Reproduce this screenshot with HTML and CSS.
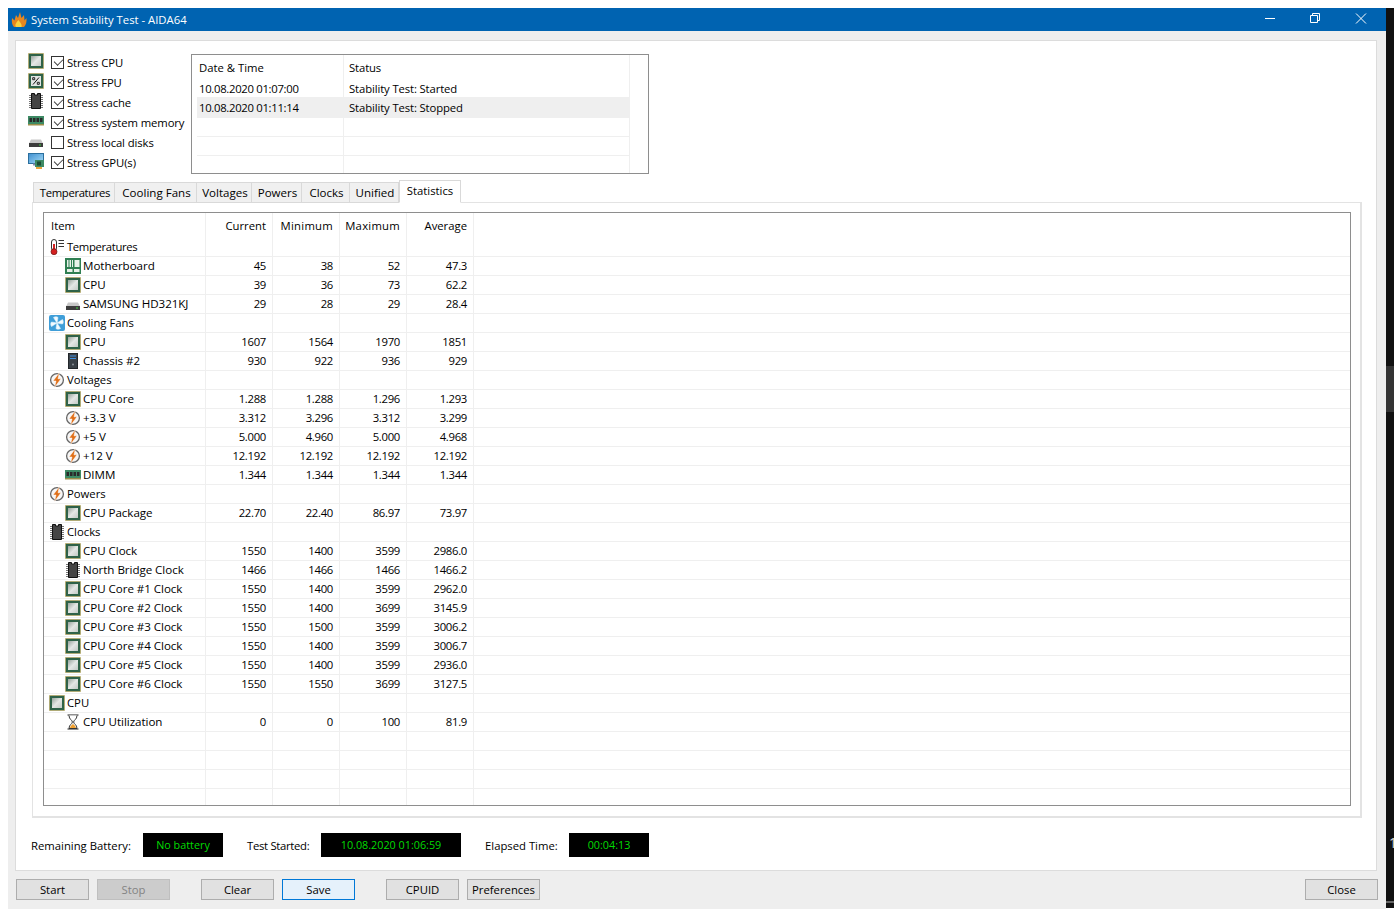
FILE: index.html
```html
<!DOCTYPE html>
<html lang="en">
<head>
<meta charset="utf-8">
<title>System Stability Test - AIDA64</title>
<link rel="stylesheet" href="styles.css">
</head>
<body>
<svg class="defs" width="0" height="0" aria-hidden="true">
  <defs>
    <linearGradient id="g-die" x1="0" y1="0" x2="1" y2="1"><stop offset="0" stop-color="#98a39c"/><stop offset=".5" stop-color="#e4e7e5"/><stop offset="1" stop-color="#c4cac6"/></linearGradient>
    <linearGradient id="g-mon" x1="0" y1="0" x2="1" y2="1"><stop offset="0" stop-color="#3f8fd0"/><stop offset="1" stop-color="#a6dcf7"/></linearGradient>
    <symbol id="i-cpu" viewBox="0 0 16 16">
      <rect x="0.500" y="0.500" width="15" height="15" fill="#2f6048" stroke="#c9a64a" stroke-dasharray="1 1"/>
      <rect x="1.500" y="1.500" width="13" height="13" fill="#2f6348"/>
      <rect x="3" y="3" width="10" height="10" fill="url(#g-die)"/>
    </symbol>
    <symbol id="i-fpu" viewBox="0 0 16 16">
      <rect x="0.500" y="0.500" width="15" height="15" fill="#2f6048" stroke="#c9a64a" stroke-dasharray="1 1"/>
      <rect x="1.500" y="1.500" width="13" height="13" fill="#2f6348"/>
      <rect x="3" y="3" width="10" height="10" fill="#e2e5e3"/>
      <path d="M5 11.500 11 4.500" stroke="#111"/>
      <path d="M4.700 4.700h2v2h-2zM9.300 9.300h2v2h-2z" stroke="#111" fill="none" stroke-width=".9"/>
    </symbol>
    <symbol id="i-chip" viewBox="0 0 16 16">
      <path d="M1 2.500h2M1 4.500h2M1 6.500h2M1 8.500h2M1 10.500h2M1 12.500h2M1 14.500h2M13 2.500h2M13 4.500h2M13 6.500h2M13 8.500h2M13 10.500h2M13 12.500h2M13 14.500h2" stroke="#777"/>
      <path d="M3.500.5h3v1.500h3V.5h3v15h-9z" fill="#444" stroke="#111"/>
    </symbol>
    <symbol id="i-ram" viewBox="0 0 16 16">
      <rect x="0" y="3" width="16" height="8" fill="#3d8a64"/>
      <path d="M1.500 5h2.500v4H1.500zM5 5h2.500v4H5zM8.500 5H11v4H8.500zM12 5h2.500v4H12z" fill="#2a2a2a"/>
      <path d="M0 11h16v1.500H0z" fill="#9a8f4a"/>
    </symbol>
    <symbol id="i-disk" viewBox="0 0 16 16">
      <path d="M3 6.500h10l2 4H1z" fill="#c7c7c7"/>
      <rect x="1" y="10" width="14" height="4" fill="#3c3c3c"/>
      <rect x="11" y="11.500" width="2" height="1" fill="#3fd23f"/>
    </symbol>
    <symbol id="i-gpu" viewBox="0 0 16 16">
      <rect x="0.500" y="0.500" width="15" height="10" fill="url(#g-mon)" stroke="#2b6f9e"/>
      <rect x="5" y="10.500" width="3" height="2" fill="#88a"/>
      <rect x="7" y="7" width="9" height="7" fill="#3d8a64"/>
      <rect x="9" y="8.500" width="4" height="4" fill="#1c4d33"/>
      <rect x="8" y="14" width="6" height="2" fill="#e8a33a"/>
    </symbol>
    <symbol id="i-therm" viewBox="0 0 16 16">
      <rect x="2.500" y="0.500" width="5" height="11" rx="2.500" fill="#fff" stroke="#333"/>
      <rect x="4" y="5" width="2" height="7" fill="#d42020"/>
      <circle cx="5" cy="12.700" r="3" fill="#d42020" stroke="#6a1010" stroke-width=".7"/>
      <path d="M9.500 1.500H15M9.500 4.500H15M9.500 7.500H15" stroke="#333" stroke-width="1.100"/>
    </symbol>
    <symbol id="i-board" viewBox="0 0 16 16">
      <rect x="0" y="0" width="16" height="16" fill="#2f7f52"/>
      <path d="M2 2h1.500v7H2zM4.500 2H6v7H4.500zM7 2h1v7H7z" fill="#e9f2ea"/>
      <rect x="9.500" y="2" width="5" height="7" fill="#e9f2ea"/>
      <rect x="2" y="11" width="5.500" height="3" fill="#e9f2ea"/>
      <rect x="9" y="11" width="5.500" height="3" fill="#e9f2ea"/>
    </symbol>
    <symbol id="i-fan" viewBox="0 0 16 16">
      <rect width="16" height="16" rx="2" fill="#3f9ed8"/>
      <path d="M8 8 4.500 2.500C6 1.500 8 1.500 9 2.500zM8 8l5.500-3.500c1 1.500 1 3.500 0 4.500zM8 8l3.500 5.500c-1.500 1-3.500 1-4.500 0zM8 8l-5.500 3.500c-1-1.500-1-3.500 0-4.500z" fill="#f4fbff" stroke="#dff2fc" stroke-width=".6"/>
    </symbol>
    <symbol id="i-case" viewBox="0 0 16 16">
      <rect x="3.500" y="0.500" width="9" height="15" fill="#3a4148" stroke="#22262a"/>
      <path d="M5 3h6M5 5.500h6" stroke="#3f8fe0" stroke-width="1.200"/>
      <circle cx="8" cy="11.500" r="1" fill="#8a9198"/>
    </symbol>
    <symbol id="i-bolt" viewBox="0 0 16 16">
      <circle cx="8" cy="8" r="6.400" fill="#f6f6f6" stroke="#666" stroke-width="1.300"/>
      <path d="M10.500.5 4 9h3L5.500 15.500 12 6.800H9z" fill="#e0701a" stroke="#fff" stroke-width=".5"/>
    </symbol>
    <symbol id="i-hour" viewBox="0 0 16 16">
      <path d="M2.500 1h11M2.500 15h11" stroke="#222" stroke-width="1.200"/>
      <path d="M4 1.500c0 4 3.400 4.500 3.400 6.500S4 10.500 4 14.500h8c0-4-3.400-4.500-3.400-6.500S12 5.500 12 1.500" fill="#fff" stroke="#333"/>
      <path d="M5 14c.4-2 2-3 3-4.200 1 1.200 2.600 2.200 3 4.200z" fill="#f0a030"/>
    </symbol>
    <symbol id="i-flame" viewBox="0 0 16 16">
      <path d="M3 15C1 13 .5 10 1 6l2.500 2.500L5 3l2 3 2-6 1.500 6L13 3l.5 5.500L15.500 6c.3 4-.5 7-2.500 9z" fill="#e8871e"/>
      <path d="M5 15c-1.500-2 0-4 2.500-7 1 2 4 4 3 7z" fill="#fbd33d"/>
    </symbol>
  </defs>
</svg>

<div class="window">
  <header class="titlebar">
    <svg class="ti"><use href="#i-flame"/></svg>
    <span class="title">System Stability Test - AIDA64</span>
    <div class="wbtns">
      <svg class="wbtn" viewBox="0 0 46 23"><path d="M19 10.500h10" stroke="#fff" fill="none"/></svg>
      <svg class="wbtn" viewBox="0 0 46 23"><path d="M18.500 7.500h7v7h-7zM20.500 7.500v-2h7v7h-2" stroke="#fff" fill="none"/></svg>
      <svg class="wbtn" viewBox="0 0 46 23"><path d="M18 5.500l10 10M28 5.500l-10 10" stroke="#fff" fill="none"/></svg>
    </div>
  </header>

  <div class="client">
    <div class="panel">
      <section class="top">
        <ul class="stress">
          <li><svg class="ic"><use href="#i-cpu"/></svg><span class="cb on"></span>Stress CPU</li>
          <li><svg class="ic"><use href="#i-fpu"/></svg><span class="cb on"></span>Stress FPU</li>
          <li><svg class="ic"><use href="#i-chip"/></svg><span class="cb on"></span>Stress cache</li>
          <li><svg class="ic"><use href="#i-ram"/></svg><span class="cb on"></span>Stress system memory</li>
          <li><svg class="ic"><use href="#i-disk"/></svg><span class="cb"></span>Stress local disks</li>
          <li><svg class="ic"><use href="#i-gpu"/></svg><span class="cb on"></span>Stress GPU(s)</li>
        </ul>
        <div class="log">
          <div class="lr lh"><span class="c1">Date &amp; Time</span><span class="c2">Status</span></div>
          <div class="lr"><span class="c1 num">10.08.2020 01:07:00</span><span class="c2">Stability Test: Started</span></div>
          <div class="lr sel"><span class="c1 num">10.08.2020 01:11:14</span><span class="c2">Stability Test: Stopped</span></div>
          <div class="lr"><span class="c1"></span><span class="c2"></span></div>
          <div class="lr"><span class="c1"></span><span class="c2"></span></div>
          <div class="lr last"><span class="c1"></span><span class="c2"></span></div>
        </div>
      </section>

      <nav class="tabs">
        <span class="tab t1"><span class="tight">Temperatures</span></span>
        <span class="tab t2">Cooling Fans</span>
        <span class="tab t3">Voltages</span>
        <span class="tab t4">Powers</span>
        <span class="tab t5">Clocks</span>
        <span class="tab t6">Unified</span>
        <span class="tab active">Statistics</span>
      </nav>

      <section class="tabpage">
        <div class="grid">
          <div class="row head"><span class="name">Item</span><span>Current</span><span class="wide">Minimum</span><span class="wide">Maximum</span><span>Average</span><span></span></div>
          <div class="row group"><span class="name"><svg class="tic"><use href="#i-therm"/></svg><span class="tight">Temperatures</span></span><span></span><span></span><span></span><span></span><span></span></div>
          <div class="row child"><span class="name"><svg class="tic"><use href="#i-board"/></svg>Motherboard</span><span>45</span><span>38</span><span>52</span><span>47.3</span><span></span></div>
          <div class="row child"><span class="name"><svg class="tic"><use href="#i-cpu"/></svg>CPU</span><span>39</span><span>36</span><span>73</span><span>62.2</span><span></span></div>
          <div class="row child"><span class="name"><svg class="tic"><use href="#i-disk"/></svg>SAMSUNG HD321KJ</span><span>29</span><span>28</span><span>29</span><span>28.4</span><span></span></div>
          <div class="row group"><span class="name"><svg class="tic"><use href="#i-fan"/></svg>Cooling Fans</span><span></span><span></span><span></span><span></span><span></span></div>
          <div class="row child"><span class="name"><svg class="tic"><use href="#i-cpu"/></svg>CPU</span><span>1607</span><span>1564</span><span>1970</span><span>1851</span><span></span></div>
          <div class="row child"><span class="name"><svg class="tic"><use href="#i-case"/></svg>Chassis #2</span><span>930</span><span>922</span><span>936</span><span>929</span><span></span></div>
          <div class="row group"><span class="name"><svg class="tic"><use href="#i-bolt"/></svg>Voltages</span><span></span><span></span><span></span><span></span><span></span></div>
          <div class="row child"><span class="name"><svg class="tic"><use href="#i-cpu"/></svg>CPU Core</span><span>1.288</span><span>1.288</span><span>1.296</span><span>1.293</span><span></span></div>
          <div class="row child"><span class="name"><svg class="tic"><use href="#i-bolt"/></svg>+3.3 V</span><span>3.312</span><span>3.296</span><span>3.312</span><span>3.299</span><span></span></div>
          <div class="row child"><span class="name"><svg class="tic"><use href="#i-bolt"/></svg>+5 V</span><span>5.000</span><span>4.960</span><span>5.000</span><span>4.968</span><span></span></div>
          <div class="row child"><span class="name"><svg class="tic"><use href="#i-bolt"/></svg>+12 V</span><span>12.192</span><span>12.192</span><span>12.192</span><span>12.192</span><span></span></div>
          <div class="row child"><span class="name"><svg class="tic"><use href="#i-ram"/></svg>DIMM</span><span>1.344</span><span>1.344</span><span>1.344</span><span>1.344</span><span></span></div>
          <div class="row group"><span class="name"><svg class="tic"><use href="#i-bolt"/></svg>Powers</span><span></span><span></span><span></span><span></span><span></span></div>
          <div class="row child"><span class="name"><svg class="tic"><use href="#i-cpu"/></svg>CPU Package</span><span>22.70</span><span>22.40</span><span>86.97</span><span>73.97</span><span></span></div>
          <div class="row group"><span class="name"><svg class="tic"><use href="#i-chip"/></svg>Clocks</span><span></span><span></span><span></span><span></span><span></span></div>
          <div class="row child"><span class="name"><svg class="tic"><use href="#i-cpu"/></svg>CPU Clock</span><span>1550</span><span>1400</span><span>3599</span><span>2986.0</span><span></span></div>
          <div class="row child"><span class="name"><svg class="tic"><use href="#i-chip"/></svg>North Bridge Clock</span><span>1466</span><span>1466</span><span>1466</span><span>1466.2</span><span></span></div>
          <div class="row child"><span class="name"><svg class="tic"><use href="#i-cpu"/></svg>CPU Core #1 Clock</span><span>1550</span><span>1400</span><span>3599</span><span>2962.0</span><span></span></div>
          <div class="row child"><span class="name"><svg class="tic"><use href="#i-cpu"/></svg>CPU Core #2 Clock</span><span>1550</span><span>1400</span><span>3699</span><span>3145.9</span><span></span></div>
          <div class="row child"><span class="name"><svg class="tic"><use href="#i-cpu"/></svg>CPU Core #3 Clock</span><span>1550</span><span>1500</span><span>3599</span><span>3006.2</span><span></span></div>
          <div class="row child"><span class="name"><svg class="tic"><use href="#i-cpu"/></svg>CPU Core #4 Clock</span><span>1550</span><span>1400</span><span>3599</span><span>3006.7</span><span></span></div>
          <div class="row child"><span class="name"><svg class="tic"><use href="#i-cpu"/></svg>CPU Core #5 Clock</span><span>1550</span><span>1400</span><span>3599</span><span>2936.0</span><span></span></div>
          <div class="row child"><span class="name"><svg class="tic"><use href="#i-cpu"/></svg>CPU Core #6 Clock</span><span>1550</span><span>1550</span><span>3699</span><span>3127.5</span><span></span></div>
          <div class="row group"><span class="name"><svg class="tic"><use href="#i-cpu"/></svg>CPU</span><span></span><span></span><span></span><span></span><span></span></div>
          <div class="row child"><span class="name"><svg class="tic"><use href="#i-hour"/></svg>CPU Utilization</span><span>0</span><span>0</span><span>100</span><span>81.9</span><span></span></div>
          <div class="row blank"><span class="name"></span><span></span><span></span><span></span><span></span><span></span></div>
          <div class="row blank"><span class="name"></span><span></span><span></span><span></span><span></span><span></span></div>
          <div class="row blank"><span class="name"></span><span></span><span></span><span></span><span></span><span></span></div>
          <div class="row blank"><span class="name"></span><span></span><span></span><span></span><span></span><span></span></div>
        </div>
      </section>

      <section class="status">
        <span class="sl s1">Remaining Battery:</span><span class="led l1">No battery</span>
        <span class="sl s2">Test Started:</span><span class="led l2">10.08.2020 01:06:59</span>
        <span class="sl s3">Elapsed Time:</span><span class="led l3">00:04:13</span>
      </section>
    </div>

    <footer class="buttons">
      <button class="btn">Start</button>
      <button class="btn off">Stop</button>
      <button class="btn g1">Clear</button>
      <button class="btn focus">Save</button>
      <button class="btn g2">CPUID</button>
      <button class="btn">Preferences</button>
      <button class="btn end">Close</button>
    </footer>
  </div>
</div>
<aside class="strip"><div class="thumb"></div><div class="glyph">1</div><div class="edge"></div></aside>
</body>
</html>
```
FILE: styles.css
```css
* { box-sizing: border-box; }
html, body { margin: 0; }
body {
  background: #fff;
  font-family: "Open Sans", "Noto Sans", sans-serif;
  font-size: 11.3px;
  color: #000;
  overflow: hidden;
  height: 916px;
  padding: 8px 0 8px 8px;
  display: flex;
}
.defs { position: absolute; }
.tight { letter-spacing: -0.35px; }
.num { letter-spacing: -0.3px; }

.window { width: 1378px; height: 900px; flex: none; display: flex; flex-direction: column; }
.titlebar { height: 23px; background: #0063b1; color: #fff; display: flex; align-items: center; flex: none; }
.ti { width: 16px; height: 16px; margin-left: 3px; }
.title { margin-left: 4px; }
.wbtns { margin-left: auto; display: flex; margin-right: 2px; }
.wbtn { width: 46px; height: 23px; }

.client { flex: 1; background: #eeeeee; padding: 9px 9px 0 7px; display: flex; flex-direction: column; }
.panel { height: 831px; flex: none; background: #fff; border: 1px solid #dcdcdc; display: flex; flex-direction: column; }

.top { display: flex; height: 139px; flex: none; padding: 4px 0 0 12px; }
.stress { list-style: none; margin: 0; padding: 7px 0 0; width: 163px; flex: none; letter-spacing: -0.1px; }
.stress li { height: 20px; display: flex; align-items: center; white-space: nowrap; }
.ic { width: 16px; height: 16px; flex: none; margin-bottom: 2px; }
.cb { width: 13px; height: 13px; border: 1px solid #333; margin: 0 3px 0 7px; flex: none; position: relative; background: #fff; }
.cb.on::after { content: ""; position: absolute; left: 1.500px; top: 1px; width: 8px; height: 5px; border-left: 1px solid #333; border-bottom: 1px solid #333; transform: rotate(-45deg) scale(.9); }

.log { width: 458px; height: 120px; flex: none; margin-top: 9px; border: 1px solid #8e8e8e; padding: 0 18px 0 5px; display: flex; flex-direction: column; overflow: hidden; }
.lr { height: 19px; flex: none; display: flex; align-items: center; border-bottom: 1px solid #efefef; }
.lr.lh { height: 24px; border-bottom: none; }
.lr.sel { height: 20px; background: #efefef; }
.lr.last { border-bottom: none; }
.c1 { width: 147px; padding-left: 2px; height: 100%; display: flex; align-items: center; border-right: 1px solid #efefef; flex: none; }
.c2 { padding-left: 5px; flex: 1; height: 100%; display: flex; align-items: center; border-right: 1px solid #efefef; white-space: nowrap; letter-spacing: -0.12px; }

.tabs { display: flex; padding-left: 17px; height: 23px; flex: none; align-items: flex-end; position: relative; z-index: 1; }
.tab { height: 21px; display: flex; align-items: center; justify-content: center; background: #f0f0f0; border: 1px solid #d9d9d9; border-left: none; white-space: nowrap; font-size: 11.55px; padding-left: 2px; }
.t1 { width: 82px; border-left: 1px solid #d9d9d9; font-size: 11.3px; }
.t2 { width: 82px; }
.t3 { width: 55px; }
.t4 { width: 50px; }
.t5 { width: 48px; }
.t6 { width: 49px; }
.tab.active { height: 23px; width: 62px; background: #fff; border-bottom-color: #fff; border-left: 1px solid #d9d9d9; padding: 0 0 3px; font-size: 11.3px; }

.tabpage { margin: -1px 0 0 16px; width: 1330px; height: 616px; flex: none; border: 2px solid #e3e3e3; border-width: 1px 2px 2px 1px; padding: 9px 9px 10px 10px; background: #fff; }
.grid { height: 594px; border: 1px solid #8e8e8e; overflow: hidden; }
.row { display: grid; grid-template-columns: 162px 67px 67px 67px 67px 1fr; height: 19px; border-bottom: 1px solid #efefef; align-items: center; white-space: nowrap; }
.row.head { height: 25px; border-bottom: none; }
.row > span { border-right: 1px solid #efefef; height: 100%; display: flex; align-items: center; justify-content: flex-end; padding-right: 6px; padding-bottom: 2px; letter-spacing: -0.3px; }
.row.head > span { letter-spacing: 0; padding-bottom: 0; }
.row.head > .wide { letter-spacing: 0.25px; }
.row > span:last-child { border-right: none; }
.row > .name { justify-content: flex-start; padding-right: 0; letter-spacing: 0; }
.row.child > .name { padding-left: 21px; font-size: 11.6px; letter-spacing: -0.05px; }
.row.group > .name { padding-left: 5px; }
.row.head > .name { padding-left: 7px; }
.tic { width: 16px; height: 16px; margin-right: 2px; flex: none; transform: translateY(1px); }

.status { display: flex; align-items: center; height: 24px; flex: none; margin-top: 15px; }
.sl { white-space: nowrap; }
.s1 { margin-left: 15px; width: 112px; }
.s2 { margin-left: 24px; width: 74px; letter-spacing: -0.3px; }
.s3 { margin-left: 24px; width: 84px; }
.led { background: #000; color: #00dc00; height: 24px; display: flex; align-items: center; justify-content: center; padding-bottom: 1px; font-size: 10.8px; }
.l1 { width: 80px; }
.l2 { width: 140px; }
.l3 { width: 80px; }

.buttons { display: flex; height: 38px; flex: none; align-items: flex-start; padding: 8px 0 0 1px; margin-right: -1px; }
.btn { width: 73px; height: 21px; font: inherit; color: #000; background: #e1e1e1; border: 1px solid #adadad; padding: 0; margin-right: 8px; }
.btn.off { background: #cccccc; border-color: #bfbfbf; color: #838383; }
.btn.g1 { margin-left: 23px; }
.btn.g2 { margin-left: 23px; }
.btn.focus { background: #e5f1fb; border: 1px solid #0078d7; }
.btn.end { margin: 0 0 0 auto; }

.strip { width: 8px; height: 900px; flex: none; background: #111; overflow: hidden; padding-top: 358px; display: flex; flex-direction: column; }
.thumb { height: 46px; background: #333; flex: none; }
.glyph { color: #ddd; font-size: 14px; line-height: 14px; margin-top: 424px; padding-left: 3px; flex: none; }
.edge { height: 2px; background: #666; margin-top: 51px; flex: none; }
```
